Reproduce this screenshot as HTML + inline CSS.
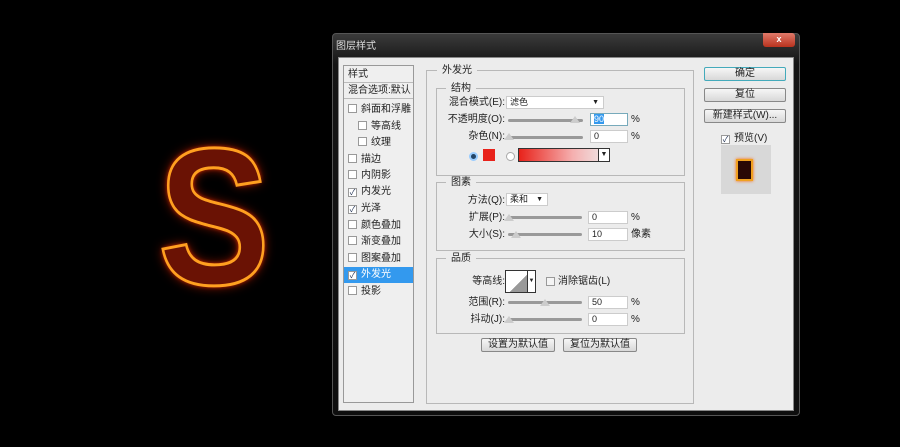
<!DOCTYPE html>
<html><head><meta charset="utf-8"><style>
*{margin:0;padding:0;box-sizing:border-box}
body{width:900px;height:447px;background:#000;position:relative;overflow:hidden;font-family:"Liberation Sans","Noto Sans CJK SC",sans-serif;font-size:10px;color:#222}
.a{position:absolute}
.S{left:158px;top:120px;font:bold 195px/1 "Liberation Sans",sans-serif;color:#6a1204;-webkit-text-stroke:3px #ffa020;text-shadow:0 0 5px #ff3a00,0 0 12px #c02000;transform:scaleX(.86);transform-origin:left top}
.win{left:332px;top:33px;width:468px;height:383px;background:linear-gradient(#3a3a3a,#151515 30px,#0e0e0e);border:1px solid #555;border-radius:4px}
.cl{left:338px;top:57px;width:456px;height:354px;background:#ececec;border:1px solid #888}
.box{border:1px solid #b8b8b8}
.lst{left:343px;top:65px;width:71px;height:338px;background:#efefef;border:1px solid #999}
.row{position:absolute;left:0;width:69px;height:16px;line-height:16px;padding-left:4px;font-size:10px;white-space:nowrap}
.cb{display:inline-block;width:9px;height:9px;border:1px solid #999;background:#fff;vertical-align:-1px;margin-right:4px;font-size:8px;line-height:7px;text-align:center;color:#235}
.btn{position:absolute;height:14px;border:1px solid #888;border-radius:2px;background:linear-gradient(#f6f6f6,#d8d8d8);text-align:center;line-height:12px;font-size:10px}
.inp{position:absolute;height:13px;background:#fff;border:1px solid #ccc;padding-left:3px;line-height:11px;font-size:9px}
.sl{position:absolute;height:3px;background:#999;border-radius:2px}
.th{position:absolute;width:0;height:0;border-left:5px solid transparent;border-right:5px solid transparent;border-bottom:7px solid #ccc}
.lb{position:absolute;font-size:10px;white-space:nowrap;text-align:right;line-height:13px}
.leg{position:absolute;background:#ececec;padding:0 5px;font-size:10px;line-height:13px}
</style></head><body>
<div class="a S">S</div>
<div class="a win"></div>
<div class="a" style="left:336px;top:37px;color:#ddd;font-size:10px">图层样式</div>
<div class="a" style="left:763px;top:33px;width:32px;height:14px;background:linear-gradient(#e07a6a,#b8321e);border-radius:0 3px 3px 3px;color:#fff;text-align:center;font-size:9px;line-height:13px;font-weight:bold">x</div>
<div class="a cl"></div>
<div class="a lst">
<div class="row" style="top:1px;border-bottom:1px solid #bbb">样式</div>
<div class="row" style="top:17px;border-bottom:1px solid #bbb">混合选项:默认</div>
<div class="row" style="top:36px"><span class="cb"></span>斜面和浮雕</div>
<div class="row" style="top:53px;padding-left:14px"><span class="cb"></span>等高线</div>
<div class="row" style="top:69px;padding-left:14px"><span class="cb"></span>纹理</div>
<div class="row" style="top:86px"><span class="cb"></span>描边</div>
<div class="row" style="top:102px"><span class="cb"></span>内阴影</div>
<div class="row" style="top:118px"><span class="cb">✓</span>内发光</div>
<div class="row" style="top:135px"><span class="cb">✓</span>光泽</div>
<div class="row" style="top:152px"><span class="cb"></span>颜色叠加</div>
<div class="row" style="top:168px"><span class="cb"></span>渐变叠加</div>
<div class="row" style="top:185px"><span class="cb"></span>图案叠加</div>
<div class="row" style="top:201px;background:#3399ee;color:#fff"><span class="cb">✓</span>外发光</div>
<div class="row" style="top:218px"><span class="cb"></span>投影</div>
</div>
<div class="a box" style="left:426px;top:70px;width:268px;height:334px"></div>
<div class="leg" style="left:437px;top:64px">外发光</div>
<div class="a box" style="left:436px;top:88px;width:249px;height:88px"></div>
<div class="leg" style="left:446px;top:82px">结构</div>
<div class="lb" style="left:440px;top:96px;width:65px">混合模式(E):</div>
<div class="inp" style="left:506px;top:96px;width:98px">滤色<span style="position:absolute;right:4px;font-size:7px">▼</span></div>
<div class="lb" style="left:440px;top:113px;width:65px">不透明度(O):</div>
<div class="sl" style="left:508px;top:119px;width:75px"></div><div class="th" style="left:570px;top:116px"></div>
<div class="inp" style="left:590px;top:113px;width:38px;border-color:#7ab"><span style="background:#39e;color:#fff">90</span></div><div class="lb" style="left:631px;top:113px">%</div>
<div class="lb" style="left:440px;top:130px;width:65px">杂色(N):</div>
<div class="sl" style="left:508px;top:136px;width:75px"></div><div class="th" style="left:504px;top:133px"></div>
<div class="inp" style="left:590px;top:130px;width:38px">0</div><div class="lb" style="left:631px;top:130px">%</div>
<div class="a" style="left:469px;top:152px;width:9px;height:9px;border-radius:50%;background:#246;border:2px solid #9cf"></div>
<div class="a" style="left:483px;top:149px;width:12px;height:12px;background:#e8221a"></div>
<div class="a" style="left:506px;top:152px;width:9px;height:9px;border-radius:50%;border:1px solid #aaa;background:#fff"></div>
<div class="a" style="left:518px;top:148px;width:92px;height:14px;border:1px solid #333;background:linear-gradient(90deg,#e8221a,#f5b0b0 60%,#eee)"><span style="position:absolute;right:0;top:0;width:11px;height:12px;background:#fff;border-left:1px solid #333;font-size:7px;text-align:center;line-height:12px">▼</span></div>
<div class="a box" style="left:436px;top:182px;width:249px;height:69px"></div>
<div class="leg" style="left:446px;top:176px">图素</div>
<div class="lb" style="left:440px;top:194px;width:65px">方法(Q):</div>
<div class="inp" style="left:506px;top:193px;width:42px">柔和<span style="position:absolute;right:4px;font-size:7px">▼</span></div>
<div class="lb" style="left:440px;top:211px;width:65px">扩展(P):</div>
<div class="sl" style="left:508px;top:216px;width:74px"></div><div class="th" style="left:504px;top:214px"></div>
<div class="inp" style="left:588px;top:211px;width:40px">0</div><div class="lb" style="left:631px;top:211px">%</div>
<div class="lb" style="left:440px;top:228px;width:65px">大小(S):</div>
<div class="sl" style="left:508px;top:233px;width:74px"></div><div class="th" style="left:511px;top:231px"></div>
<div class="inp" style="left:588px;top:228px;width:40px">10</div><div class="lb" style="left:631px;top:228px">像素</div>
<div class="a box" style="left:436px;top:258px;width:249px;height:76px"></div>
<div class="leg" style="left:446px;top:252px">品质</div>
<div class="lb" style="left:440px;top:275px;width:65px">等高线:</div>
<div class="a" style="left:505px;top:270px;width:31px;height:23px;border:1px solid #333;background:linear-gradient(135deg,#fff 50%,#999 50%)"><span style="position:absolute;right:0;top:0;width:8px;height:21px;background:#fff;border-left:1px solid #333;font-size:6px;text-align:center;line-height:21px">▼</span></div>
<div class="a" style="left:546px;top:277px;width:9px;height:9px;border:1px solid #999;background:#f4f4f4"></div>
<div class="lb" style="left:558px;top:275px">消除锯齿(L)</div>
<div class="lb" style="left:440px;top:296px;width:65px">范围(R):</div>
<div class="sl" style="left:508px;top:301px;width:74px"></div><div class="th" style="left:540px;top:299px"></div>
<div class="inp" style="left:588px;top:296px;width:40px">50</div><div class="lb" style="left:631px;top:296px">%</div>
<div class="lb" style="left:440px;top:313px;width:65px">抖动(J):</div>
<div class="sl" style="left:508px;top:318px;width:74px"></div><div class="th" style="left:504px;top:316px"></div>
<div class="inp" style="left:588px;top:313px;width:40px">0</div><div class="lb" style="left:631px;top:313px">%</div>
<div class="btn" style="left:481px;top:338px;width:74px">设置为默认值</div>
<div class="btn" style="left:563px;top:338px;width:74px">复位为默认值</div>
<div class="btn" style="left:704px;top:67px;width:82px;border-color:#4ab">确定</div>
<div class="btn" style="left:704px;top:88px;width:82px">复位</div>
<div class="btn" style="left:704px;top:109px;width:82px">新建样式(W)...</div>
<div class="a" style="left:721px;top:129px;font-size:10px"><span class="cb">✓</span>预览(V)</div>
<div class="a" style="left:721px;top:145px;width:50px;height:49px;background:#d8d8d8"></div>
<div class="a" style="left:736px;top:159px;width:17px;height:22px;background:#2a0805;border:2px solid #f0a020;box-shadow:0 0 3px #f60"></div>
</body></html>
